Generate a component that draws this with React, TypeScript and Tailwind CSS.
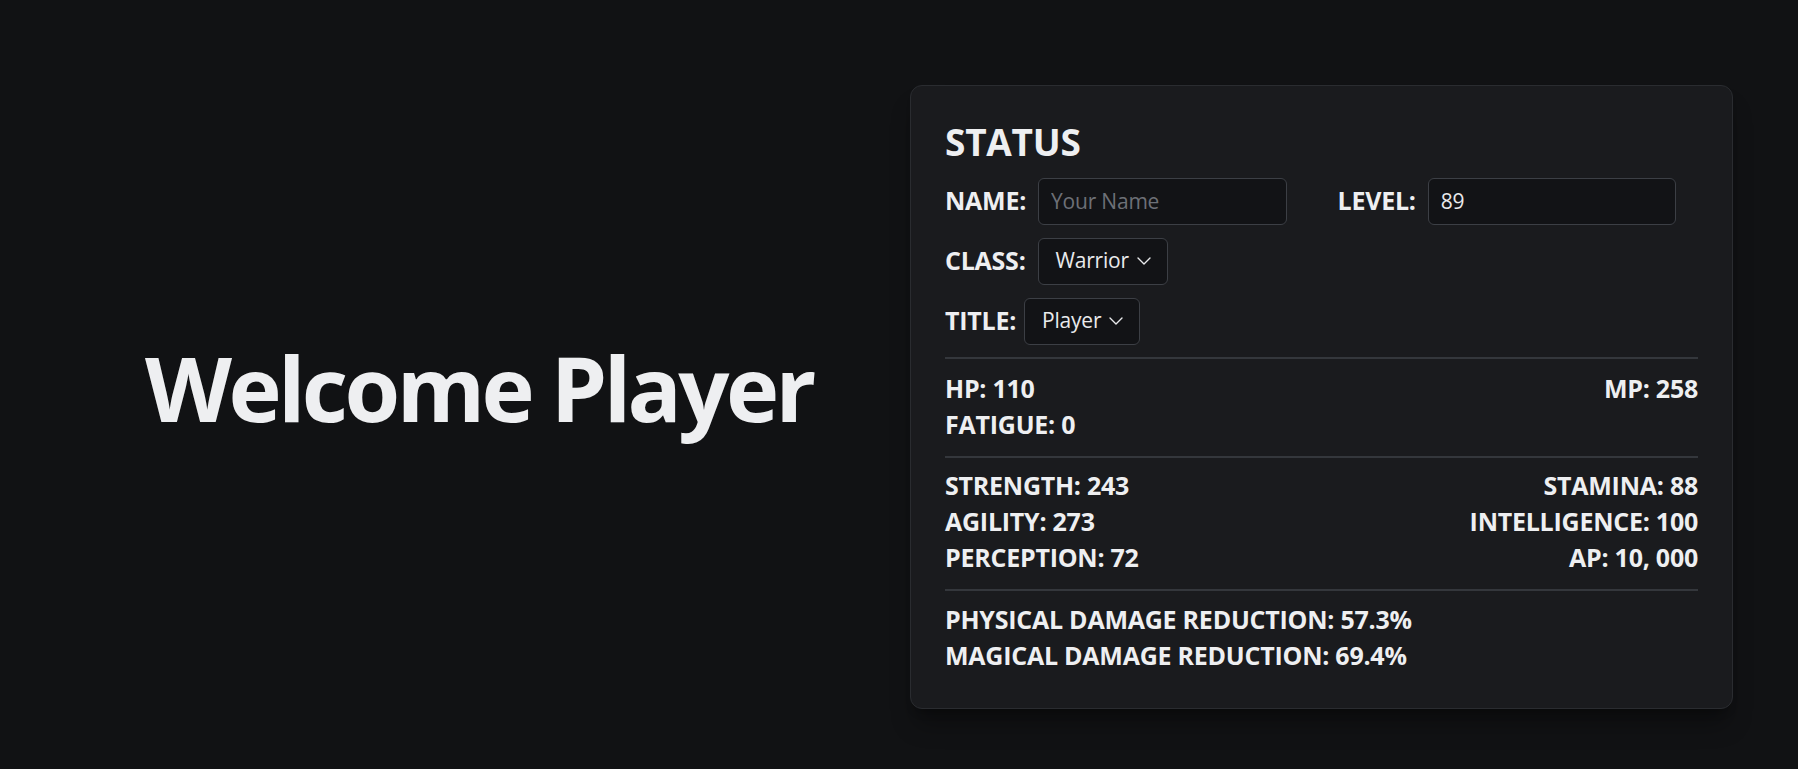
import { useState } from "react";

function Chevron() {
  return (
    <svg width="14" height="8" viewBox="0 0 14 8" fill="none" className="shrink-0">
      <path d="M1 1l6 6 6-6" stroke="currentColor" strokeWidth="1.4" strokeLinecap="round" strokeLinejoin="round" />
    </svg>
  );
}

function Pick({ value }: { value: string }) {
  return (
    <button className="h-[47px] flex items-center gap-[8px] pl-[17px] pr-[16px] rounded-md border-[1.5px] border-[#3c3f45] bg-[#121316] text-[21px] tracking-[-0.01em] font-normal text-[#e9eaec]">
      <span>{value}</span>
      <Chevron />
    </button>
  );
}

const stats1 = [
  ["HP: 110", "MP: 258"],
  ["FATIGUE: 0", ""],
];

const stats2 = [
  ["STRENGTH: 243", "STAMINA: 88"],
  ["AGILITY: 273", "INTELLIGENCE: 100"],
  ["PERCEPTION: 72", "AP: 10, 000"],
];

export default function App() {
  const [name, setName] = useState("");
  const [level, setLevel] = useState("89");

  return (
    <div className="min-h-screen w-full bg-[#111214] text-[#eeeff1] font-['Open_Sans',sans-serif] flex items-center">
      <div className="flex-1 pl-[145px] mt-[5px]">
        <h1 className="text-[90px] font-bold leading-none tracking-[-0.04em]">Welcome Player</h1>
      </div>

      <div className="w-[823px] mr-[65px] mt-[24px] rounded-xl border border-[#2a2c30] bg-[#1a1b1e] shadow-xl shadow-black/30 px-[34px] pt-[34px] pb-[35px] font-bold tracking-[-0.015em]">
        <h2 className="text-[37px] leading-[44px]">STATUS</h2>

        <div className="mt-[14px] flex flex-col gap-[13px] text-[25px]">
          <div className="grid grid-cols-2 gap-8">
            <div className="flex items-center gap-3">
              <span>NAME:</span>
              <input
                value={name}
                onChange={e => setName(e.target.value)}
                placeholder="Your Name"
                className="w-[249px] h-[47px] px-3 rounded-md border-[1.5px] border-[#3c3f45] bg-[#121316] text-[21px] tracking-[-0.01em] font-normal text-[#e9eaec] placeholder:text-[#6d7077] outline-none"
              />
            </div>
            <div className="flex items-center gap-3">
              <span>LEVEL:</span>
              <input
                value={level}
                onChange={e => setLevel(e.target.value)}
                className="w-[248px] h-[47px] px-3 rounded-md border-[1.5px] border-[#3c3f45] bg-[#121316] text-[21px] tracking-[-0.01em] font-normal text-[#e9eaec] outline-none"
              />
            </div>
          </div>
          <div className="flex items-center gap-3">
            <span>CLASS:</span>
            <Pick value="Warrior" />
          </div>
          <div className="flex items-center gap-2">
            <span>TITLE:</span>
            <Pick value="Player" />
          </div>
        </div>

        <div className="mt-[12px] h-[2px] bg-[#34373c]" />

        <div className="pt-[11px] pb-[14px] text-[25px] leading-[36px]">
          {stats1.map(([l, r]) => (
            <div key={l} className="flex justify-between">
              <span>{l}</span>
              <span>{r}</span>
            </div>
          ))}
        </div>

        <div className="h-[2px] bg-[#34373c]" />

        <div className="pt-[9px] pb-[14px] text-[25px] leading-[36px]">
          {stats2.map(([l, r]) => (
            <div key={l} className="flex justify-between">
              <span>{l}</span>
              <span>{r}</span>
            </div>
          ))}
        </div>

        <div className="h-[2px] bg-[#34373c]" />

        <div className="pt-[10px] text-[25px] leading-[36px]">
          <p>PHYSICAL DAMAGE REDUCTION: 57.3%</p>
          <p>MAGICAL DAMAGE REDUCTION: 69.4%</p>
        </div>
      </div>
    </div>
  );
}
